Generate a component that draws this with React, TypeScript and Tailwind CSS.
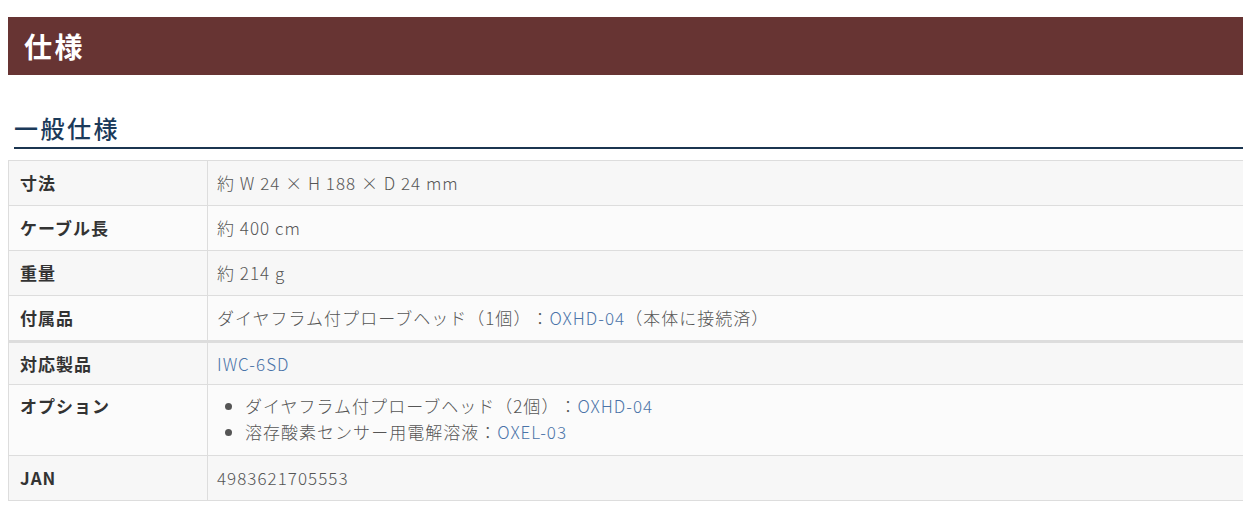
const font = "font-['Noto_Sans_CJK_JP','Noto_Sans',sans-serif]";

type Row = { label: string; value: React.ReactNode; h: string; extra?: string };

const Link = ({ children }: { children: React.ReactNode }) => (
  <span className="text-[#4a73a8]">{children}</span>
);

const rows: Row[] = [
  { label: "寸法", value: "約 W 24 × H 188 × D 24 mm", h: "h-[45px]" },
  { label: "ケーブル長", value: "約 400 cm", h: "h-[45px]" },
  { label: "重量", value: "約 214 g", h: "h-[45px]" },
  {
    label: "付属品",
    value: (
      <>
        ダイヤフラム付プローブヘッド（1個）：<Link>OXHD-04</Link>（本体に接続済）
      </>
    ),
    h: "h-[45px]",
  },
  { label: "対応製品", value: <Link>IWC-6SD</Link>, h: "h-[44px]", extra: "border-t-2" },
  {
    label: "オプション",
    value: (
      <ul className="list-disc pl-[28px] leading-[26px]">
        <li>
          ダイヤフラム付プローブヘッド（2個）：<Link>OXHD-04</Link>
        </li>
        <li>
          溶存酸素センサー用電解溶液：<Link>OXEL-03</Link>
        </li>
      </ul>
    ),
    h: "h-[71px]",
  },
  { label: "JAN", value: "4983621705553", h: "h-[45px]" },
];

export default function App() {
  return (
    <div className={`${font} w-[1243px] h-[511px] overflow-hidden bg-white [text-spacing-trim:space-all]`}>
      <div className="ml-2 w-[1250px] pt-[17px]">
        <div className="h-[58px] bg-[#673433] flex items-center pl-4">
          <h2 className="text-white text-[28px] font-bold tracking-[2.5px] leading-none">仕様</h2>
        </div>

        <div className="ml-[6px] mt-[37px] border-b-2 border-[#1b3550] pb-[3px]">
          <h3 className="text-[#1b3a5a] text-[24px] font-medium leading-[32px] tracking-[2.5px]">
            一般仕様
          </h3>
        </div>

        <div className="mt-[11px] border-t border-l border-r border-[#dddddd] text-[17px] tracking-[0.06em]">
          {rows.map((r, i) => (
            <div
              key={r.label}
              className={`flex ${r.h} ${r.extra ?? ""} border-b border-[#dddddd] ${
                i % 2 === 0 ? "bg-[#f7f7f7]" : "bg-[#fbfbfb]"
              }`}
            >
              <div
                className={`w-[199px] shrink-0 border-r border-[#dddddd] pl-[11px] font-bold text-[#333] leading-[24px] ${
                  r.h === "h-[71px]" ? "pt-[9px]" : "flex items-center"
                }`}
              >
                {r.label}
              </div>
              <div
                className={`flex-1 pl-[9px] text-[#555] font-light leading-[24px] ${
                  r.h === "h-[71px]" ? "pt-[8px]" : "flex items-center"
                }`}
              >
                {r.value}
              </div>
            </div>
          ))}
        </div>
      </div>
    </div>
  );
}
